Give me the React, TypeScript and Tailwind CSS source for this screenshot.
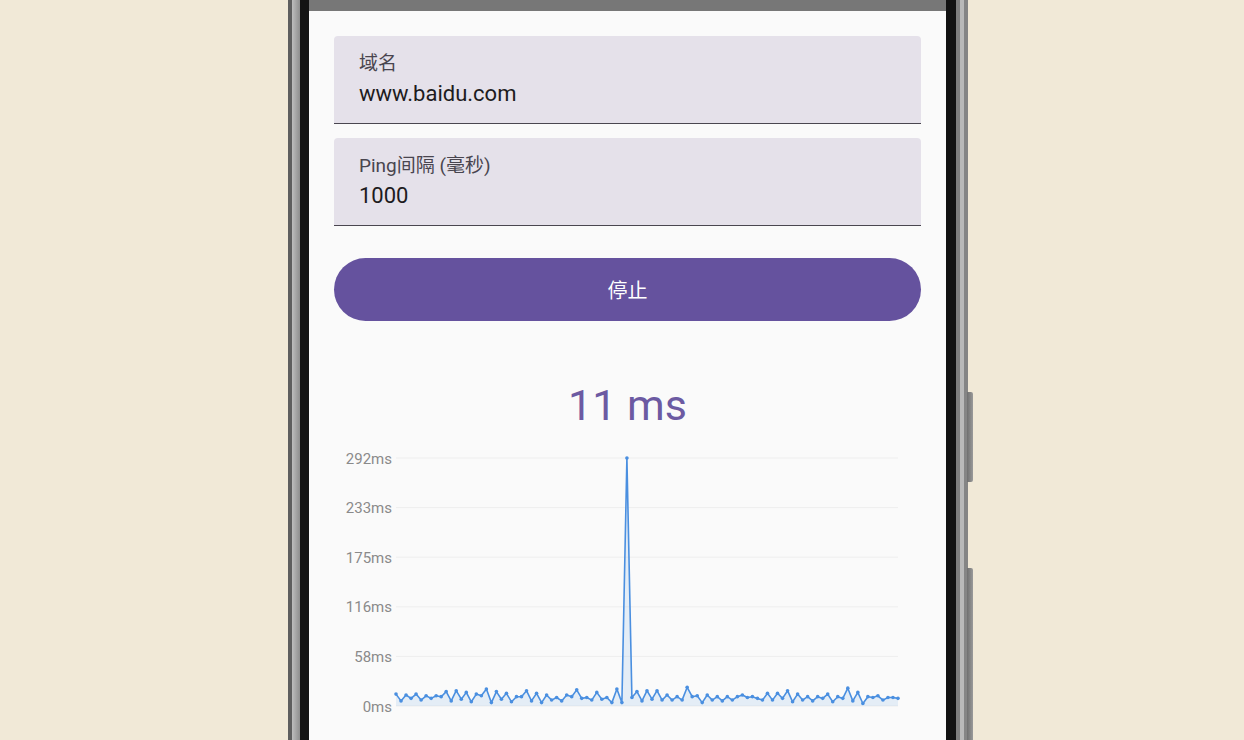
import React from 'react';

const pings: number[] = [
  14, 6, 13, 9, 14, 7, 12, 9, 12, 11, 17, 6, 18, 8, 16, 5, 14, 12, 20, 4, 17, 8, 15, 5, 11, 11, 18, 6, 15, 4,
  13, 7, 10, 6, 13, 11, 19, 9, 10, 7, 16, 8, 10, 4, 20, 4,
  292,
  10, 17, 6, 18, 8, 18, 7, 13, 7, 11, 7, 22, 11, 12, 4, 13, 7, 11, 6, 11, 7, 11, 13, 10, 11, 9, 7, 15, 7, 15,
  9, 18, 5, 14, 7, 11, 6, 11, 9, 14, 5, 11, 9, 21, 6, 16, 3, 11, 10, 12, 7, 10, 10, 9,
];

const axis = [292, 233, 175, 116, 58, 0];

// chart geometry, in svg pixels
const left = 62;
const right = 564;
const top = 27;
const bottom = 275;
const maxMs = 292;

const PingChart: React.FC = () => {
  const step = (right - left) / (pings.length - 1);
  const pts = pings.map((v, i) => [left + i * step, bottom - (v / maxMs) * (bottom - top)]);
  const line = pts.map(([x, y], i) => `${i === 0 ? 'M' : 'L'}${x.toFixed(1)},${y.toFixed(1)}`).join(' ');
  const area = `${line} L${right},${bottom} L${left},${bottom} Z`;

  return (
    <svg width={587} height={300} className="block">
      {axis.map((v, i) => {
        const y = top + (i * (bottom - top)) / (axis.length - 1);
        return (
          <g key={v}>
            <line x1={left} x2={right} y1={y} y2={y} stroke="#eeeeee" strokeWidth={1} />
            <text x={58} y={y + 5.5} textAnchor="end" fontSize={15} fill="#8a8a8a" fontFamily="Roboto, sans-serif">
              {v}ms
            </text>
          </g>
        );
      })}
      <path d={area} fill="#4a90e2" fillOpacity={0.12} />
      <path d={line} fill="none" stroke="#4a8fe0" strokeWidth={1.6} strokeLinejoin="round" />
      {pts.map(([x, y], i) => (
        <circle key={i} cx={x} cy={y} r={1.8} fill="#4a8fe0" />
      ))}
    </svg>
  );
};

const Field: React.FC<{ label: string; value: string }> = ({ label, value }) => (
  <div className="h-[88px] rounded-t-[4px] bg-[#e5e1ea] border-b border-[#4a4650] pl-[25px] pt-[16px]">
    <div className="text-[19px] leading-[24px] text-[#49454f]">{label}</div>
    <div className="mt-[4px] text-[22px] leading-[28px] text-[#1d1b20]">{value}</div>
  </div>
);

const App: React.FC = () => {
  return (
    <div className="w-[1244px] h-[740px] overflow-hidden bg-[#f1e9d7] flex pl-[288px] font-['Roboto','Noto_Sans_CJK_SC',sans-serif]">
      {/* left bezel */}
      <div className="w-[4px] h-full bg-[#5e5e5e]" />
      <div className="w-[8px] h-full bg-gradient-to-r from-[#bdbdbd] to-[#8e8e8e]" />
      <div className="w-[9px] h-full bg-[#141414]" />

      {/* screen */}
      <div className="w-[637px] h-full bg-[#fafafa] flex flex-col">
        <div className="h-[11px] bg-[#777777]" />
        <div className="px-[25px] pt-[25px] flex flex-col">
          <Field label="域名" value="www.baidu.com" />
          <div className="mt-[14px]">
            <Field label="Ping间隔 (毫秒)" value="1000" />
          </div>
          <button className="mt-[32px] h-[63px] rounded-full bg-[#65529e] text-white text-[20px] flex items-center justify-center pt-[3px]">
            停止
          </button>
          <div className="mt-[58px] text-center text-[43px] leading-[52px] text-[#6c5aa2]">11 ms</div>
          <PingChart />
        </div>
      </div>

      {/* right bezel */}
      <div className="w-[10px] h-full bg-[#121212]" />
      <div className="w-[4px] h-full bg-[#7e7e7e]" />
      <div className="w-[4px] h-full bg-[#b9b9b9]" />
      <div className="w-[4px] h-full bg-[#858585]" />
      <div className="w-[6px] -ml-px flex flex-col pt-[392px]">
        <div className="h-[90px] bg-gradient-to-r from-[#6f6f6f] to-[#9a9a9a] rounded-r-[2px]" />
        <div className="h-[86px]" />
        <div className="flex-1 bg-gradient-to-r from-[#6f6f6f] to-[#9a9a9a] rounded-tr-[2px]" />
      </div>
    </div>
  );
};

export default App;
